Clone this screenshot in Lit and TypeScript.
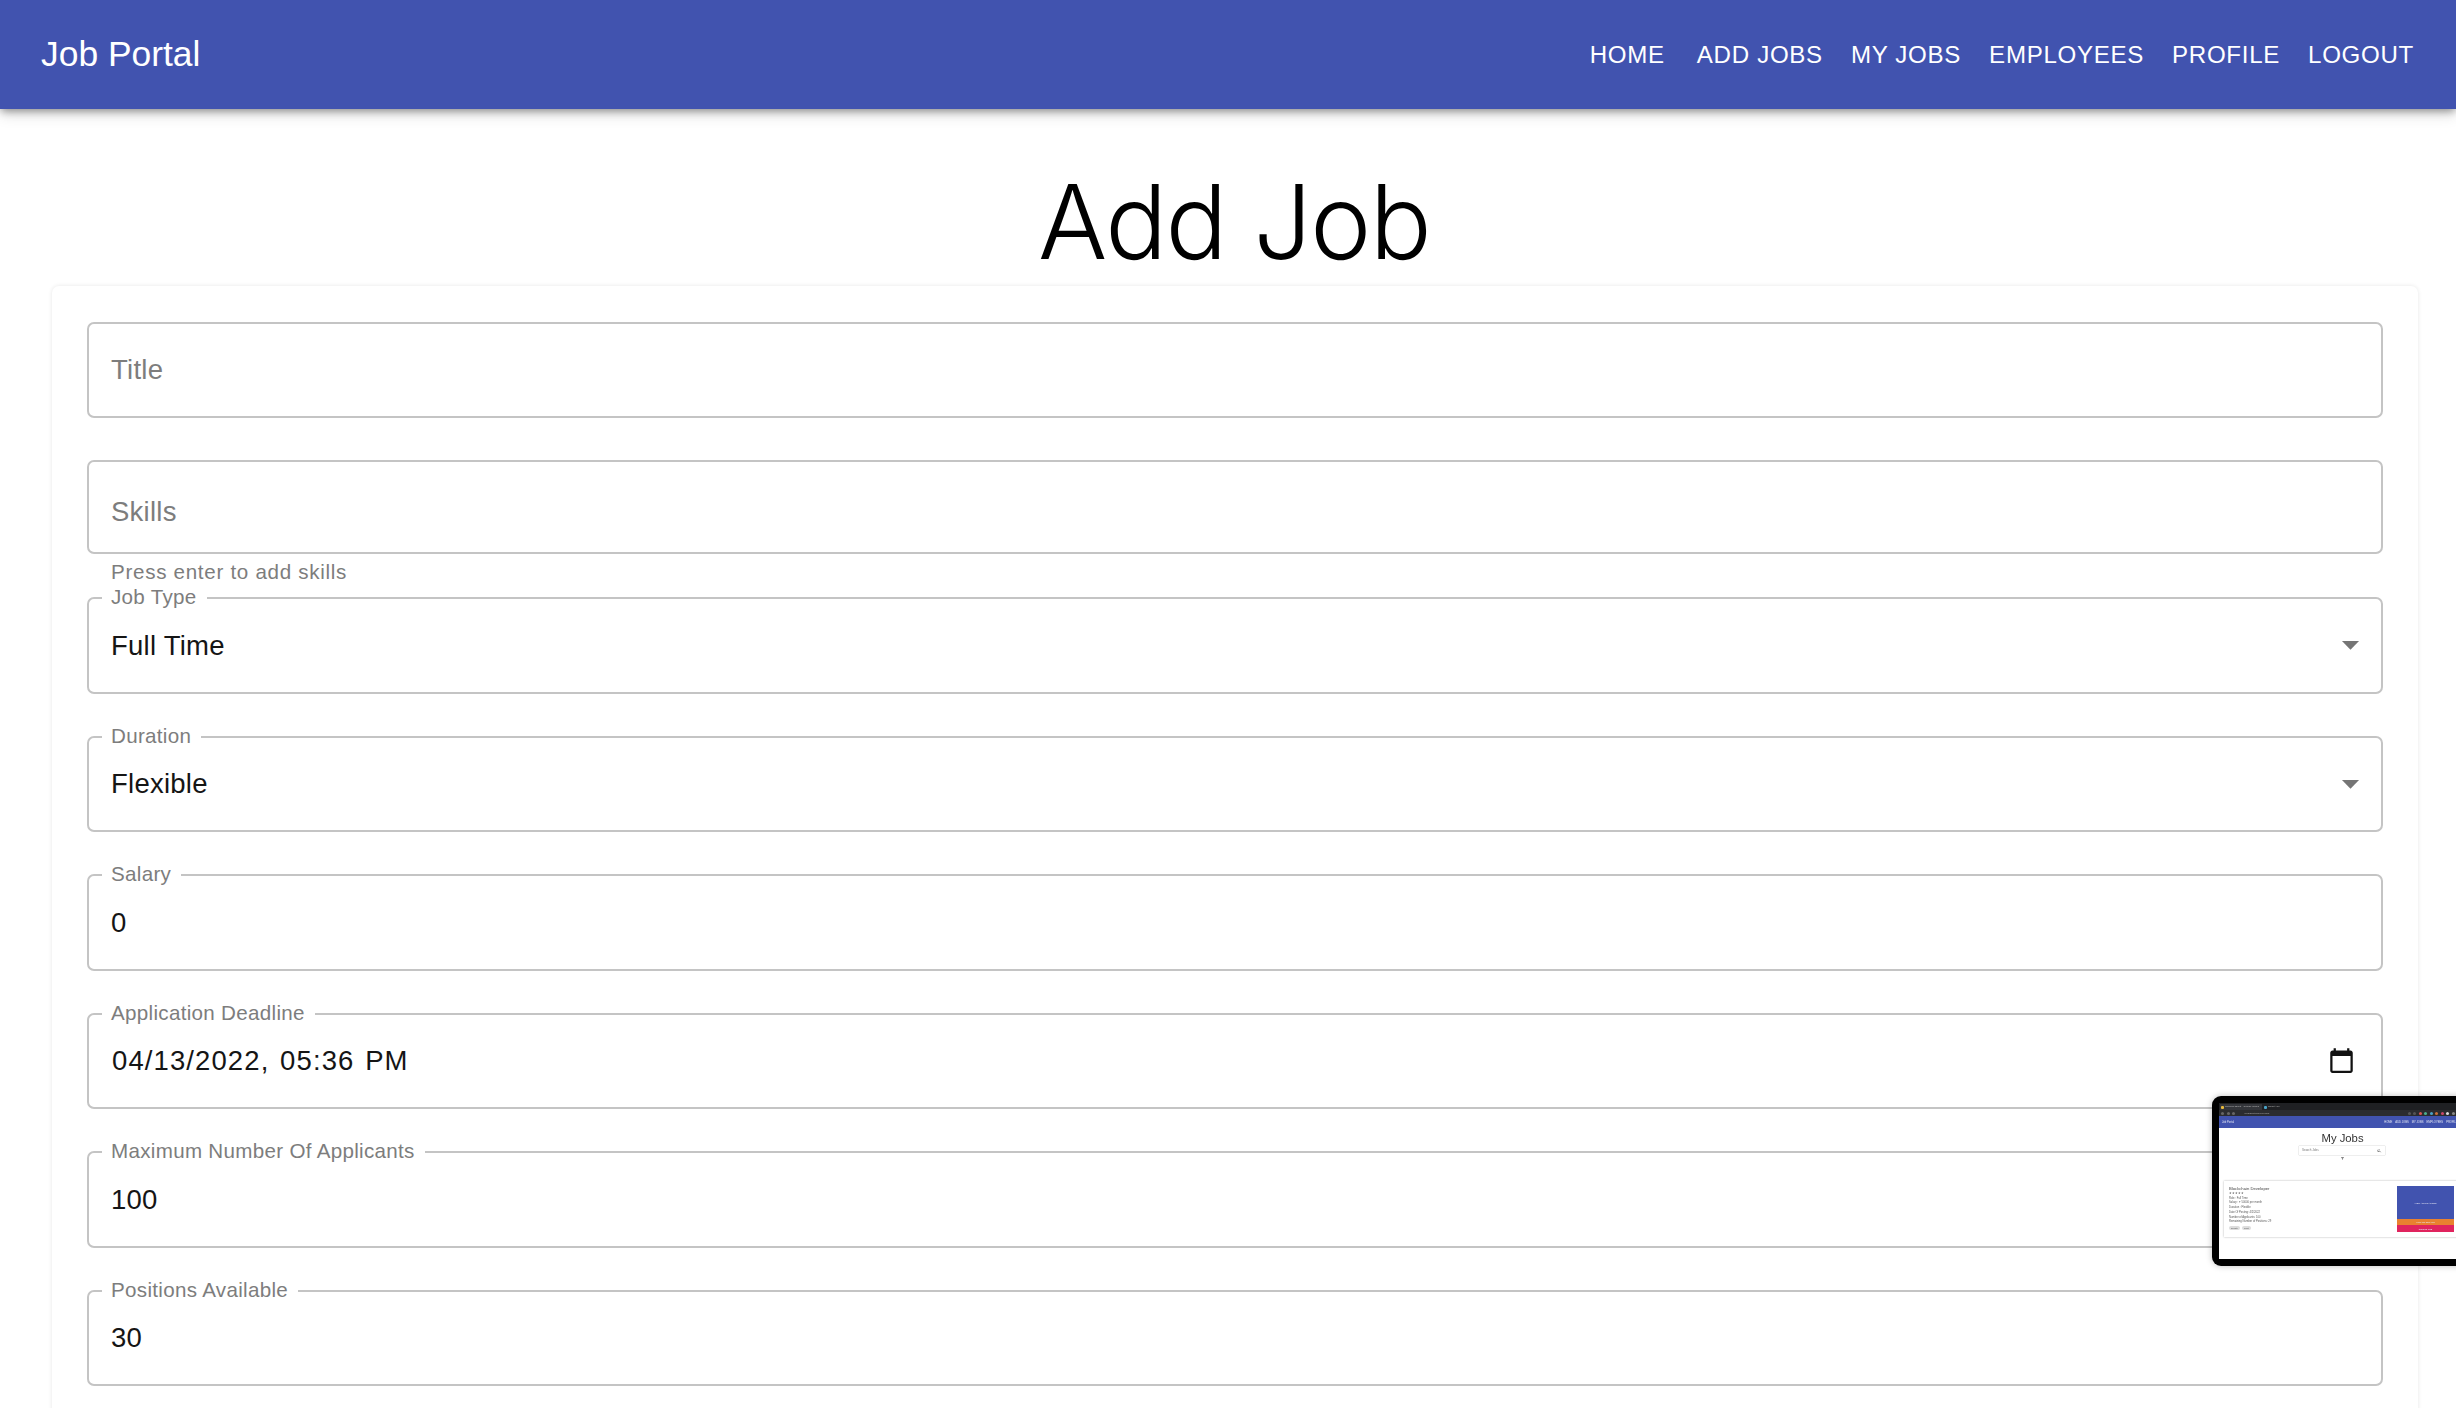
import { LitElement, html, css } from "lit";
import { customElement } from "lit/decorators.js";

const CAL = "M20 3h-1V1h-2v2H7V1H5v2H4c-1.1 0-2 .9-2 2v16c0 1.1.9 2 2 2h16c1.1 0 2-.9 2-2V5c0-1.1-.9-2-2-2zm0 18H4V8h16v13z";

@customElement("app-root")
export class AppRoot extends LitElement {
  static styles = css`
    :host { display: block; height: 100vh; overflow: hidden; background: #fff; position: relative;
      font-family: "Liberation Sans", Arial, sans-serif; }
    * { box-sizing: border-box; }
    header { height: 109px; background: #4153af; color: #fff; display: flex; align-items: center; padding: 0 42px 0 41px;
      box-shadow: 0 3px 8px -1px rgba(0,0,0,.4), 0 6px 14px rgba(0,0,0,.12); position: relative; }
    .brand { font-size: 35.4px; flex: 1; }
    nav { display: flex; gap: 28px; font-size: 24.1px; letter-spacing: .7px; }
    nav span:first-child { margin-right: 4px; }
    h1 { margin: 0; height: 177px; display: flex; align-items: center; justify-content: center;
      font-family: Inter, "Liberation Sans", sans-serif; font-weight: 300; font-size: 103px; letter-spacing: -1.6px; color: #000; line-height: 1; padding: 47px 0 0 12px; }
    .card { margin: 0 38px 0 52px; padding: 35.5px 35px 0 35px; border-radius: 7px; height: 1200px;
      box-shadow: 0 0 4px rgba(0,0,0,.1); }
    .field { height: 96.5px; margin-bottom: 42px; border: 2px solid #c4c4c4; border-radius: 7px; padding: 1px 22px 0; position: relative;
      display: flex; align-items: center; justify-content: space-between; font-size: 27.5px; letter-spacing: .25px; color: #151515; }
    .ph { color: #7d7d7d; }
    .skills { height: 94px; margin-bottom: 0; padding-top: 10px; }
    .help { height: 43px; padding: 6px 0 0 24px; font-size: 20.6px; letter-spacing: .7px; line-height: 23px; color: #7d7d7d; }
    label { position: absolute; left: 13px; top: -14px; padding: 0 10px 0 9px; background: #fff; font-size: 20.6px; line-height: 23px; color: #7d7d7d; letter-spacing: .3px; }
    .date { letter-spacing: 1.1px; word-spacing: 2px; margin-left: 1px; }
    .arrow { width: 41px; height: 41px; margin: -2px -12px 0 0; fill: #757575; }
    .cal { width: 27px; height: 27px; margin: -2px 4px 0 0; fill: #111; }

    .thumb { position: absolute; left: 2212px; top: 1096px; width: 260px; height: 170px; background: #000; border-radius: 9px; padding: 7px 0 7px 7px;
      box-shadow: 0 0 6px rgba(0,0,0,.25); overflow: hidden; filter: blur(.6px); }
    .screen { height: 100%; background: #fff; display: flex; flex-direction: column; font-size: 3px; color: #444; overflow: hidden; }
    .chrome { height: 13px; background: #2b2c2f; flex: none; display: flex; flex-direction: column; }
    .tabs { height: 7px; background: #1f2023; display: flex; align-items: flex-end; padding-left: 1px; gap: 1px; }
    .tab { width: 42px; height: 6px; background: #33353a; color: #bbb; font-size: 2.5px; padding-left: 1px; line-height: 6px; white-space: nowrap; overflow: hidden; display: flex; align-items: center; gap: 1px; }
    .tab + .tab { background: #1f2023; width: 38px; }
    .tab b { width: 3px; height: 3px; background: var(--c); flex: none; border-radius: 1px; }
    .url { flex: 1; display: flex; align-items: center; gap: 2.5px; padding: 0 17.5px 0 2px; color: #aaa; font-size: 2.5px; }
    .url b { width: 3px; height: 3px; border-radius: 50%; background: var(--c); flex: none; }
    .url i { flex: 1; font-style: normal; padding-left: 7px; }
    .mbar { height: 12px; background: #4153af; color: #e4e7f5; flex: none; display: flex; align-items: center; justify-content: space-between; padding: 0 0 0 3px; font-size: 2.7px; }
    .mbar div { display: flex; gap: 3px; }
    .mt { text-align: center; font-size: 11.3px; line-height: 13px; margin-top: 4px; width: 247px; color: #333; }
    .search { width: 86px; height: 9px; margin: 1px 0 0 80px; box-shadow: 0 0 1px rgba(0,0,0,.4); padding: 0 3px; line-height: 9px; font-size: 3px; color: #777; display: flex; justify-content: space-between; align-items: center; }
    .search svg { width: 5px; height: 5px; fill: #888; }
    .filter { display: block; width: 5px; height: 5px; margin: 1px 0 0 121px; fill: #888; flex: none; }
    .jcard { margin: 20px 0 0 5px; height: 56px; display: flex; justify-content: space-between; box-shadow: 0 0 2px rgba(0,0,0,.3); padding: 5px 18px 5px 5px; flex: none; }
    .info { font-size: 2.7px; line-height: 4.7px; color: #555; }
    .info h4 { margin: 0; font-size: 4.2px; line-height: 6px; font-weight: 400; color: #444; }
    .chips { display: flex; gap: 2px; margin-top: 1px; }
    .chips span { background: #ddd; border-radius: 2px; padding: 0 2px; line-height: 4.5px; font-size: 2.2px; }
    .acts { width: 57px; display: flex; flex-direction: column; color: #e8e8f5; font-size: 2.2px; text-align: center; }
    .acts div { display: flex; align-items: center; justify-content: center; }
    .a1 { height: 34px; background: #4153af; } .a2 { height: 6px; background: #e9812f; } .a3 { height: 7px; background: #e0245e; }
  `;

  field(label: string, value: string) {
    return html`<div class="field"><label>${label}</label><span>${value}</span></div>`;
  }
  select(label: string, value: string) {
    return html`<div class="field"><label>${label}</label><span>${value}</span>
      <svg class="arrow" viewBox="0 0 24 24"><path d="M7 10l5 5 5-5z"/></svg></div>`;
  }

  render() {
    return html`
      <header><div class="brand">Job Portal</div>
        <nav><span>HOME</span><span>ADD JOBS</span><span>MY JOBS</span><span>EMPLOYEES</span><span>PROFILE</span><span>LOGOUT</span></nav>
      </header>
      <h1>Add Job</h1>
      <div class="card">
        <div class="field"><span class="ph">Title</span></div>
        <div class="field skills"><span class="ph">Skills</span></div>
        <div class="help">Press enter to add skills</div>
        ${this.select("Job Type", "Full Time")}
        ${this.select("Duration", "Flexible")}
        ${this.field("Salary", "0")}
        <div class="field"><label>Application Deadline</label><span class="date">04/13/2022, 05:36 PM</span>
          <svg class="cal" viewBox="0 0 24 24"><path d=${CAL}/></svg></div>
        ${this.field("Maximum Number Of Applicants", "100")}
        ${this.field("Positions Available", "30")}
      </div>
      <div class="thumb"><div class="screen">
        <div class="chrome">
          <div class="tabs"><div class="tab"><b style="--c:#e8b93a"></b>Referral Talent - Google Slides</div><div class="tab"><b style="--c:#4aa3c7"></b>React App</div></div>
          <div class="url">${["#666","#666","#666"].map(c => html`<b style="--c:${c}"></b>`)}<i>localhost:3000/myjobs</i>
            ${["#555","#555","#d9534f","#4caf8f","#4aa3c7","#c96f3a","#c9486a","#ddd","#888"].map(c => html`<b style="--c:${c}"></b>`)}</div>
        </div>
        <div class="mbar"><span>Job Portal</span><div><span>HOME</span><span>ADD JOBS</span><span>MY JOBS</span><span>EMPLOYEES</span><span>PROFILE</span><span>LOGOUT</span></div></div>
        <div class="mt">My Jobs</div>
        <div class="search"><span>Search Jobs</span><svg viewBox="0 0 24 24"><path d="M15.5 14h-.8l-.3-.3A6.5 6.5 0 1 0 14 15.5l.3.3v.8l5 5 1.5-1.5-5-5zm-6 0a4.5 4.5 0 1 1 0-9 4.5 4.5 0 0 1 0 9z"/></svg></div>
        <svg class="filter" viewBox="0 0 24 24"><path d="M4 5h16l-6 8v6l-4-2v-4z"/></svg>
        <div class="jcard">
          <div class="info"><h4>Blockchain Developer</h4><div>★★★★★</div><div>Role : Full Time</div><div>Salary : ₹ 50000 per month</div><div>Duration : Flexible</div><div>Date Of Posting: 4/2/2022</div><div>Number of Applicants: 100</div><div>Remaining Number of Positions: 29</div>
            <div class="chips"><span>Solidity</span><span>Rust</span></div></div>
          <div class="acts"><div class="a1">VIEW APPLICATIONS</div><div class="a2">UPDATE DETAILS</div><div class="a3">DELETE JOB</div></div>
        </div>
      </div></div>
    `;
  }
}
